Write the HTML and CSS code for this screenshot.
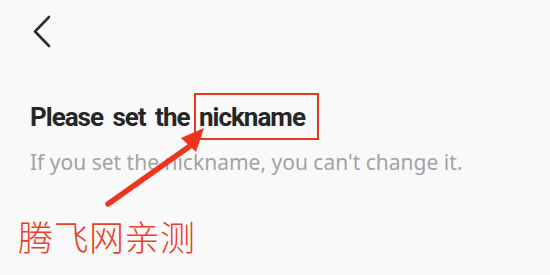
FILE: index.html
```html
<!DOCTYPE html>
<html>
<head>
  <meta charset="utf-8">
  <title>Set nickname</title>
  <link rel="stylesheet" href="styles.css">
</head>
<body>
  <main class="screen">
    <header class="topbar">
      <button class="back" type="button" aria-label="Back">
        <svg width="24" height="34" viewBox="0 0 24 34">
          <path d="M17 2 L3 16.5 L17 31" fill="none" stroke="#2e2e2e" stroke-width="2.6" stroke-linecap="round" stroke-linejoin="round"/>
        </svg>
      </button>
    </header>

    <section class="intro">
      <h1 class="title">Please set the <span class="mark">nickname</span></h1>
      <p class="hint">If you set the nickname, you can't change it.</p>
    </section>

    <p class="stamp">腾飞网亲测</p>

    <!-- annotation arrow over the hint text -->
    <svg class="arrow" width="550" height="275" viewBox="0 0 550 275">
      <line x1="108" y1="204" x2="190" y2="146" stroke="#f0321e" stroke-width="5.5" stroke-linecap="round"/>
      <polygon points="204,128 181,138 196,152" fill="#f0321e"/>
    </svg>
  </main>
</body>
</html>
```

FILE: styles.css
```css
body {
  margin: 0;
  background: #f9f9f9;
  font-family: "Noto Sans", "Open Sans", sans-serif;
}
.screen {
  position: relative;
  width: 550px;
  height: 275px;
  overflow: hidden;
}
.topbar {
  height: 64px;
  padding: 15px 0 0 32px;
  box-sizing: border-box;
}
.back {
  border: none;
  background: none;
  padding: 0;
  display: block;
}
.intro {
  padding: 38px 0 0 30px;
}
.title {
  margin: 0;
  font-family: Roboto, sans-serif;
  font-size: 26px;
  font-weight: 700;
  color: #262626;
  letter-spacing: -1px;
  word-spacing: 4px;
  line-height: 30px;
}
.mark {
  display: inline-block;
  padding: 7px 12px 6px 3px;
  margin: -9px -14px -8px -5px;
  border: 2px solid #e23b22;
}
.hint {
  margin: 16px 0 0;
  font-size: 21px;
  color: #a3a3a3;
  line-height: 28px;
}
.stamp {
  margin: 40px 0 0 18px;
  font-family: "Noto Sans CJK SC", sans-serif;
  font-size: 35px;
  font-weight: 300;
  letter-spacing: 0.5px;
  line-height: 40px;
  color: #e8402a;
}
.arrow {
  position: absolute;
  left: 0;
  top: 0;
  pointer-events: none;
}
```
